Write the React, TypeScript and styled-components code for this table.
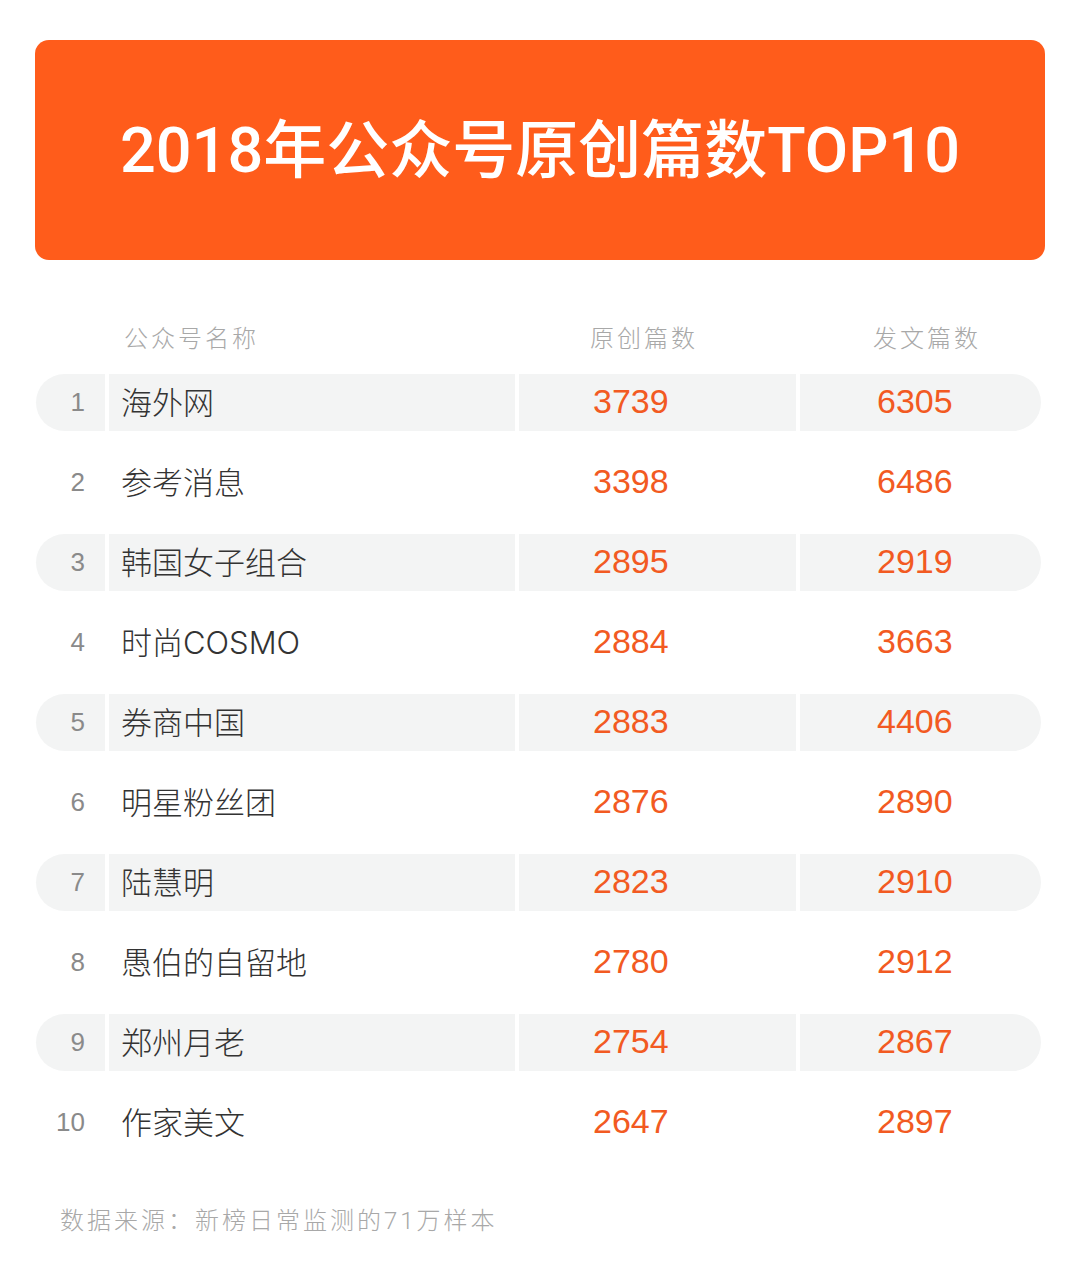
import React from "react";
import styled, { createGlobalStyle } from "styled-components";

const GlobalStyle = createGlobalStyle`
  html, body {
    margin: 0;
    padding: 0;
    background: #ffffff;
  }
  body {
    font-family: "Liberation Sans", "Noto Sans CJK SC", sans-serif;
  }
`;

const Page = styled.div`
  width: 1080px;
  height: 1280px;
  box-sizing: border-box;
  padding: 40px 35px 0 35px;
  display: flex;
  flex-direction: column;
  background: #ffffff;
`;

const Banner = styled.div`
  height: 220px;
  border-radius: 14px;
  background: #ff5c1b;
  display: flex;
  align-items: center;
  justify-content: center;
`;

const Title = styled.h1`
  margin: 0;
  color: #ffffff;
  font-family: "Roboto", "Noto Sans CJK SC", sans-serif;
  font-size: 63px;
  font-weight: 500;
  letter-spacing: 0;
  line-height: 1;
`;

const Table = styled.div`
  margin-top: 56px;
  display: flex;
  flex-direction: column;
  padding-left: 1px;
`;

const Grid = styled.div`
  display: grid;
  grid-template-columns: 69px 406px 277px 241px;
  column-gap: 4px;
`;

const HeadRow = styled(Grid)`
  height: 40px;
  margin-bottom: 18px;
`;

const HeadLabel = styled.div<{ $pad: number }>`
  padding-left: ${(p) => p.$pad}px;
  display: flex;
  align-items: center;
  font-family: "Noto Sans CJK SC", sans-serif;
  font-size: 24px;
  font-weight: 300;
  letter-spacing: 3px;
  color: #a8a8a8;
`;

const Rows = styled.div`
  display: flex;
  flex-direction: column;
  gap: 23px;
`;

const Row = styled(Grid)`
  height: 57px;
`;

const Cell = styled.div<{ $shaded: boolean; $pad?: number }>`
  display: flex;
  align-items: center;
  background: ${(p) => (p.$shaded ? "#f3f4f4" : "transparent")};
  padding-left: ${(p) => p.$pad ?? 0}px;
  box-sizing: border-box;
`;

const RankCell = styled(Cell)`
  justify-content: flex-end;
  padding-right: 20px;
  border-radius: 29px 0 0 29px;
  font-family: "Liberation Sans", sans-serif;
  font-size: 26px;
  color: #8a8a8a;
`;

const NameCell = styled(Cell)`
  padding-bottom: 5px;
  font-family: "Inter", "Noto Sans CJK SC", sans-serif;
  font-size: 31px;
  font-weight: 300;
  color: #333333;
`;

const NumCell = styled(Cell)<{ $last?: boolean }>`
  padding-bottom: 3px;
  font-family: "Liberation Sans", sans-serif;
  font-size: 34px;
  color: #f25a22;
  border-radius: ${(p) => (p.$last ? "0 29px 29px 0" : "0")};
`;

const Footer = styled.div`
  margin-top: 50px;
  padding-left: 25px;
  font-family: "Roboto", "Noto Sans CJK SC", sans-serif;
  font-size: 24px;
  font-weight: 300;
  letter-spacing: 3px;
  color: #a8a8a8;
`;

const data: [string, number, number][] = [
  ["海外网", 3739, 6305],
  ["参考消息", 3398, 6486],
  ["韩国女子组合", 2895, 2919],
  ["时尚COSMO", 2884, 3663],
  ["券商中国", 2883, 4406],
  ["明星粉丝团", 2876, 2890],
  ["陆慧明", 2823, 2910],
  ["愚伯的自留地", 2780, 2912],
  ["郑州月老", 2754, 2867],
  ["作家美文", 2647, 2897],
];

export default function App() {
  return (
    <>
      <GlobalStyle />
      <Page>
        <Banner>
          <Title>2018年公众号原创篇数TOP10</Title>
        </Banner>
        <Table>
          <HeadRow>
            <div />
            <HeadLabel $pad={15}>公众号名称</HeadLabel>
            <HeadLabel $pad={71}>原创篇数</HeadLabel>
            <HeadLabel $pad={73}>发文篇数</HeadLabel>
          </HeadRow>
          <Rows>
            {data.map(([name, orig, total], i) => {
              const shaded = i % 2 === 0;
              return (
                <Row key={name}>
                  <RankCell $shaded={shaded}>{i + 1}</RankCell>
                  <NameCell $shaded={shaded} $pad={12}>
                    {name}
                  </NameCell>
                  <NumCell $shaded={shaded} $pad={74}>
                    {orig}
                  </NumCell>
                  <NumCell $shaded={shaded} $pad={77} $last>
                    {total}
                  </NumCell>
                </Row>
              );
            })}
          </Rows>
        </Table>
        <Footer>数据来源：新榜日常监测的71万样本</Footer>
      </Page>
    </>
  );
}
